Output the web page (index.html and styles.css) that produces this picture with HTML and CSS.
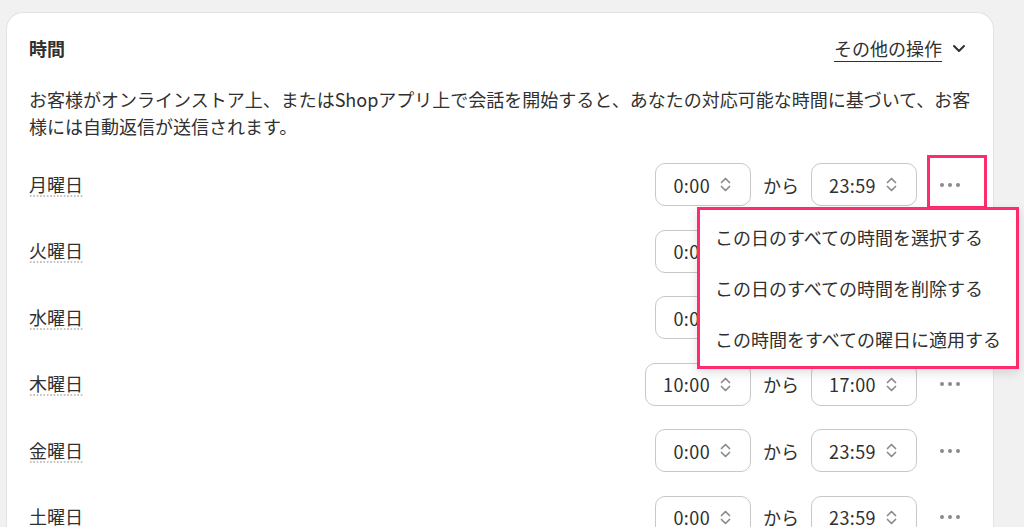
FILE: index.html
```html
<!DOCTYPE html>
<html lang="ja">
<head>
    <meta charset="UTF-8">
    <meta name="viewport" content="width=device-width, initial-scale=1.0">
    <title>時間</title>
    <link rel="stylesheet" href="styles.css">
</head>
<body>
    <div class="card">
        <div class="card-header">
            <h2>時間</h2>
            <button class="more-actions">
                <span>その他の操作</span>
                <svg width="14" height="9" viewBox="0 0 14 9"><path d="M2 2 L7 7 L12 2" fill="none" stroke="#303030" stroke-width="2" stroke-linecap="round" stroke-linejoin="round"/></svg>
            </button>
        </div>
        <p class="desc">お客様がオンラインストア上、またはShopアプリ上で会話を開始すると、あなたの対応可能な時間に基づいて、お客様には自動返信が送信されます。</p>

        <div class="days">
            <div class="day">
                <span class="day-name">月曜日</span>
                <div class="hours">
                    <div class="time-select">0:00 <svg class="updown" width="11" height="17" viewBox="0 0 11 17"><path d="M1.5 6.5 L5.5 2.5 L9.5 6.5 M1.5 10.5 L5.5 14.5 L9.5 10.5" fill="none" stroke="#8a8a8a" stroke-width="1.7" stroke-linecap="round" stroke-linejoin="round"/></svg></div>
                    <span class="sep">から</span>
                    <div class="time-select">23:59 <svg class="updown" width="11" height="17" viewBox="0 0 11 17"><path d="M1.5 6.5 L5.5 2.5 L9.5 6.5 M1.5 10.5 L5.5 14.5 L9.5 10.5" fill="none" stroke="#8a8a8a" stroke-width="1.7" stroke-linecap="round" stroke-linejoin="round"/></svg></div>
                    <div class="day-menu">
                        <button class="dots highlighted"><svg width="20" height="4" viewBox="0 0 20 4"><circle cx="2" cy="2" r="2" fill="#8a8a8a"/><circle cx="10" cy="2" r="2" fill="#8a8a8a"/><circle cx="18" cy="2" r="2" fill="#8a8a8a"/></svg></button>
                        <ul class="popover">
                            <li>この日のすべての時間を選択する</li>
                            <li>この日のすべての時間を削除する</li>
                            <li>この時間をすべての曜日に適用する</li>
                        </ul>
                    </div>
                </div>
            </div>

            <div class="day">
                <span class="day-name">火曜日</span>
                <div class="hours">
                    <div class="time-select">0:00 <svg class="updown" width="11" height="17" viewBox="0 0 11 17"><path d="M1.5 6.5 L5.5 2.5 L9.5 6.5 M1.5 10.5 L5.5 14.5 L9.5 10.5" fill="none" stroke="#8a8a8a" stroke-width="1.7" stroke-linecap="round" stroke-linejoin="round"/></svg></div>
                    <span class="sep">から</span>
                    <div class="time-select">23:59 <svg class="updown" width="11" height="17" viewBox="0 0 11 17"><path d="M1.5 6.5 L5.5 2.5 L9.5 6.5 M1.5 10.5 L5.5 14.5 L9.5 10.5" fill="none" stroke="#8a8a8a" stroke-width="1.7" stroke-linecap="round" stroke-linejoin="round"/></svg></div>
                    <div class="day-menu">
                        <button class="dots"><svg width="20" height="4" viewBox="0 0 20 4"><circle cx="2" cy="2" r="2" fill="#8a8a8a"/><circle cx="10" cy="2" r="2" fill="#8a8a8a"/><circle cx="18" cy="2" r="2" fill="#8a8a8a"/></svg></button>
                    </div>
                </div>
            </div>

            <div class="day">
                <span class="day-name">水曜日</span>
                <div class="hours">
                    <div class="time-select">0:00 <svg class="updown" width="11" height="17" viewBox="0 0 11 17"><path d="M1.5 6.5 L5.5 2.5 L9.5 6.5 M1.5 10.5 L5.5 14.5 L9.5 10.5" fill="none" stroke="#8a8a8a" stroke-width="1.7" stroke-linecap="round" stroke-linejoin="round"/></svg></div>
                    <span class="sep">から</span>
                    <div class="time-select">23:59 <svg class="updown" width="11" height="17" viewBox="0 0 11 17"><path d="M1.5 6.5 L5.5 2.5 L9.5 6.5 M1.5 10.5 L5.5 14.5 L9.5 10.5" fill="none" stroke="#8a8a8a" stroke-width="1.7" stroke-linecap="round" stroke-linejoin="round"/></svg></div>
                    <div class="day-menu">
                        <button class="dots"><svg width="20" height="4" viewBox="0 0 20 4"><circle cx="2" cy="2" r="2" fill="#8a8a8a"/><circle cx="10" cy="2" r="2" fill="#8a8a8a"/><circle cx="18" cy="2" r="2" fill="#8a8a8a"/></svg></button>
                    </div>
                </div>
            </div>

            <div class="day">
                <span class="day-name">木曜日</span>
                <div class="hours">
                    <div class="time-select">10:00 <svg class="updown" width="11" height="17" viewBox="0 0 11 17"><path d="M1.5 6.5 L5.5 2.5 L9.5 6.5 M1.5 10.5 L5.5 14.5 L9.5 10.5" fill="none" stroke="#8a8a8a" stroke-width="1.7" stroke-linecap="round" stroke-linejoin="round"/></svg></div>
                    <span class="sep">から</span>
                    <div class="time-select">17:00 <svg class="updown" width="11" height="17" viewBox="0 0 11 17"><path d="M1.5 6.5 L5.5 2.5 L9.5 6.5 M1.5 10.5 L5.5 14.5 L9.5 10.5" fill="none" stroke="#8a8a8a" stroke-width="1.7" stroke-linecap="round" stroke-linejoin="round"/></svg></div>
                    <div class="day-menu">
                        <button class="dots"><svg width="20" height="4" viewBox="0 0 20 4"><circle cx="2" cy="2" r="2" fill="#8a8a8a"/><circle cx="10" cy="2" r="2" fill="#8a8a8a"/><circle cx="18" cy="2" r="2" fill="#8a8a8a"/></svg></button>
                    </div>
                </div>
            </div>

            <div class="day">
                <span class="day-name">金曜日</span>
                <div class="hours">
                    <div class="time-select">0:00 <svg class="updown" width="11" height="17" viewBox="0 0 11 17"><path d="M1.5 6.5 L5.5 2.5 L9.5 6.5 M1.5 10.5 L5.5 14.5 L9.5 10.5" fill="none" stroke="#8a8a8a" stroke-width="1.7" stroke-linecap="round" stroke-linejoin="round"/></svg></div>
                    <span class="sep">から</span>
                    <div class="time-select">23:59 <svg class="updown" width="11" height="17" viewBox="0 0 11 17"><path d="M1.5 6.5 L5.5 2.5 L9.5 6.5 M1.5 10.5 L5.5 14.5 L9.5 10.5" fill="none" stroke="#8a8a8a" stroke-width="1.7" stroke-linecap="round" stroke-linejoin="round"/></svg></div>
                    <div class="day-menu">
                        <button class="dots"><svg width="20" height="4" viewBox="0 0 20 4"><circle cx="2" cy="2" r="2" fill="#8a8a8a"/><circle cx="10" cy="2" r="2" fill="#8a8a8a"/><circle cx="18" cy="2" r="2" fill="#8a8a8a"/></svg></button>
                    </div>
                </div>
            </div>

            <div class="day">
                <span class="day-name">土曜日</span>
                <div class="hours">
                    <div class="time-select">0:00 <svg class="updown" width="11" height="17" viewBox="0 0 11 17"><path d="M1.5 6.5 L5.5 2.5 L9.5 6.5 M1.5 10.5 L5.5 14.5 L9.5 10.5" fill="none" stroke="#8a8a8a" stroke-width="1.7" stroke-linecap="round" stroke-linejoin="round"/></svg></div>
                    <span class="sep">から</span>
                    <div class="time-select">23:59 <svg class="updown" width="11" height="17" viewBox="0 0 11 17"><path d="M1.5 6.5 L5.5 2.5 L9.5 6.5 M1.5 10.5 L5.5 14.5 L9.5 10.5" fill="none" stroke="#8a8a8a" stroke-width="1.7" stroke-linecap="round" stroke-linejoin="round"/></svg></div>
                    <div class="day-menu">
                        <button class="dots"><svg width="20" height="4" viewBox="0 0 20 4"><circle cx="2" cy="2" r="2" fill="#8a8a8a"/><circle cx="10" cy="2" r="2" fill="#8a8a8a"/><circle cx="18" cy="2" r="2" fill="#8a8a8a"/></svg></button>
                    </div>
                </div>
            </div>
        </div>
    </div>
</body>
</html>
```

FILE: styles.css
```css
* { box-sizing: border-box; }
body {
    margin: 0;
    background: #f1f1f1;
    font-family: "Noto Sans CJK JP", "Noto Sans", sans-serif;
    font-size: 18px;
    color: #303030;
    overflow: hidden;
}
.card {
    margin: 13px 0 0 7px;
    width: 986px;
    min-height: 600px;
    padding: 21px 22px 0 22px;
    background: #fff;
    border-radius: 16px 16px 0 0;
    box-shadow: 0 0 0 1px #e3e3e3;
}
.card-header {
    display: flex;
    justify-content: space-between;
    align-items: center;
    height: 28px;
}
.card-header h2 {
    margin: 0;
    font-size: 18px;
    font-weight: 700;
    line-height: 28px;
}
.more-actions {
    display: flex;
    align-items: center;
    gap: 10px;
    margin-right: 5px;
    padding: 0;
    border: 0;
    background: none;
    font: inherit;
    color: inherit;
}
.more-actions span {
    text-decoration: underline;
    text-underline-offset: 5px;
    text-decoration-thickness: 1px;
}
.desc {
    margin: 24px -8px 0 0;
    line-height: 27px;
}
.days {
    display: flex;
    flex-direction: column;
    gap: 23.6px;
    margin-top: 23px;
}
.day {
    display: flex;
    justify-content: space-between;
    align-items: center;
    height: 43px;
}
.day-name {
    line-height: 22px;
    padding-bottom: 2px;
    background-image: radial-gradient(circle, #c4c4c4 0.9px, transparent 1.1px);
    background-size: 3.4px 2px;
    background-repeat: repeat-x;
    background-position: left bottom;
}
.hours {
    display: flex;
    align-items: center;
    gap: 12px;
}
.time-select {
    display: flex;
    align-items: center;
    gap: 10px;
    height: 43px;
    padding: 0 19px 0 17px;
    border: 1px solid #c8c8c8;
    border-radius: 10px;
    letter-spacing: 0.4px;
}
.updown { display: block; }
.day-menu { position: relative; }
.dots {
    display: flex;
    align-items: center;
    justify-content: center;
    width: 42px;
    height: 43px;
    padding: 0;
    border: 0;
    background: none;
}
.highlighted::after {
    content: "";
    position: absolute;
    left: -2px;
    top: -8px;
    width: 54px;
    height: 48px;
    border: 3px solid #fe2c6c;
}
.popover {
    position: absolute;
    top: 43.5px;
    right: -48px;
    width: 322px;
    margin: 0;
    padding: 2px 0 1px;
    list-style: none;
    background: #fff;
    border: 3px solid #fe2c6c;
    box-shadow: 0 4px 10px rgba(0, 0, 0, 0.12);
    z-index: 2;
}
.popover li {
    height: 51px;
    line-height: 51px;
    padding-left: 15px;
    white-space: nowrap;
}
```
